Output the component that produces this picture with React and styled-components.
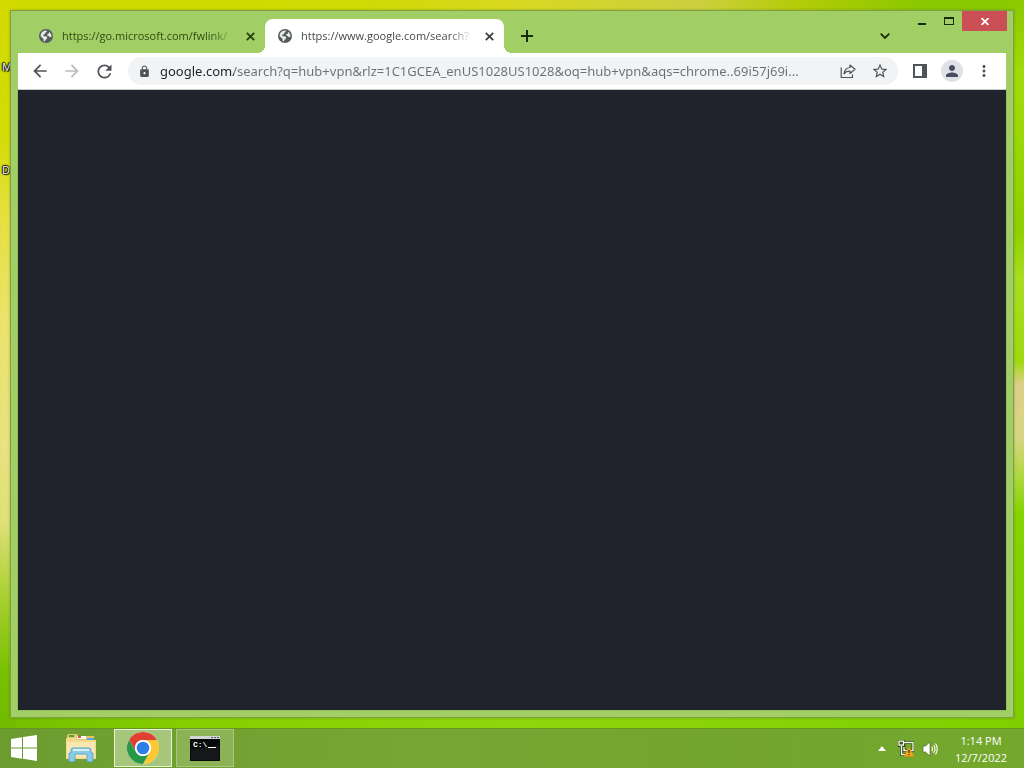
import React from "react";
import styled, { createGlobalStyle } from "styled-components";
import {
  MdArrowBack,
  MdArrowForward,
  MdLock,
  MdMoreVert,
  MdPerson,
  MdRefresh,
  MdStarBorder,
} from "react-icons/md";

const colors = {
  frame: "#a1cf65",
  toolbar: "#ffffff",
  field: "#f1f3f4",
  page: "#20222c",
  text: "#202124",
  muted: "#6b6f74",
  tabText: "#2f4a13",
  close: "#ca5056",
};

const GlobalStyle = createGlobalStyle`
  * {
    box-sizing: border-box;
  }

  body {
    margin: 0;
    font-family: "Open Sans", "Noto Sans", sans-serif;
    font-size: 11px;
    overflow: hidden;
  }

  button,
  input {
    margin: 0;
    padding: 0;
    border: 0;
    background: none;
    font: inherit;
    color: inherit;
  }
`;

// Desktop
const Desktop = styled.div`
  position: relative;
  display: flex;
  flex-direction: column;
  height: 100vh;
  background:
    linear-gradient(180deg, #8cc800 0%, #a2dc08 10%, #8fd000 30%, #a8dd20 36%, #9fda10 47%, #dccf88 50%, #d8d684 57%, #b0d840 62%, #84d400 67%, #7fcc00 100%) right / 16px 100% no-repeat,
    linear-gradient(180deg, #d2da00 0%, #d4dc08 18%, #e6e040 28%, #ebe36c 42%, #e8e280 58%, #dfe078 68%, #a8d030 78%, #76bf00 88%, #70b800 100%) left / 16px 100% no-repeat,
    linear-gradient(90deg, #d0da00 0%, #d0da04 35%, #d8d820 50%, #ccd040 68%, #b4cc08 78%, #8ac800 90%, #8ac800 100%) top / 100% 50% no-repeat,
    linear-gradient(90deg, #74bd00 0%, #86d000 20%, #90d60c 50%, #7fd000 100%);
`;

const Shortcut = styled.a`
  position: absolute;
  left: 2px;
  top: ${({ $top }) => $top}px;
  color: #ffffff;
  line-height: 16px;
  text-decoration: none;
  text-shadow: 0 0 2px #000000, 1px 1px 1px #000000, -1px 0 1px #000000, 0 -1px 1px #000000;
`;

// Browser window
const BrowserWindow = styled.main`
  position: relative;
  display: flex;
  flex-direction: column;
  flex: 1;
  min-height: 0;
  margin: 10px;
  padding: 0 7px 7px;
  border: 1px solid #7fa042;
  background: ${colors.frame};
  box-shadow: 0 0 3px rgba(40, 60, 0, 0.25);
`;

const TitleBar = styled.header`
  display: flex;
  height: 42px;
  padding-left: 8px;
`;

const TabList = styled.div`
  display: flex;
  align-items: flex-end;
  min-width: 0;
`;

const Tab = styled.div`
  position: relative;
  display: flex;
  align-items: center;
  width: 239px;
  height: 34px;
  padding: 0 7px 0 13px;
  border-radius: 8px 8px 0 0;
  color: ${({ $active }) => ($active ? "#45484c" : colors.tabText)};
  background: ${({ $active }) => ($active ? colors.toolbar : "transparent")};

  &::before,
  &::after {
    content: "";
    display: ${({ $active }) => ($active ? "block" : "none")};
    position: absolute;
    bottom: 0;
    width: 8px;
    height: 8px;
  }

  &::before {
    left: -8px;
    background: radial-gradient(circle at 0 0, transparent 8px, ${colors.toolbar} 8px);
  }

  &::after {
    right: -8px;
    background: radial-gradient(circle at 100% 0, transparent 8px, ${colors.toolbar} 8px);
  }
`;

const TabLabel = styled.button`
  display: flex;
  align-items: center;
  gap: 9px;
  flex: 1;
  min-width: 0;
  text-align: left;
`;

const TabTitle = styled.span`
  flex: 1;
  overflow: hidden;
  white-space: nowrap;
  line-height: 16px;
  mask-image: linear-gradient(90deg, #000000 calc(100% - 24px), transparent);
`;

const TabButton = styled.button`
  display: flex;
  align-items: center;
  justify-content: center;
  flex: none;
  width: 16px;
  height: 16px;
  margin-left: 8px;
  color: ${({ $active }) => ($active ? "#3c4043" : "#24400c")};
`;

const NewTab = styled.button`
  display: flex;
  align-items: center;
  justify-content: center;
  align-self: flex-end;
  width: 28px;
  height: 34px;
  margin-left: 9px;
  color: #1b2e08;
`;

const WindowControls = styled.div`
  display: flex;
  align-items: flex-start;
  margin: 0 -1px 0 auto;
  color: #1a2b0a;
`;

const TabSearch = styled.button`
  display: flex;
  align-items: center;
  justify-content: center;
  align-self: flex-end;
  width: 28px;
  height: 34px;
  margin-right: 9px;
`;

const Caption = styled.button`
  display: flex;
  align-items: center;
  justify-content: center;
  width: ${({ $close }) => ($close ? 45 : 27)}px;
  height: 20px;
  color: ${({ $close }) => ($close ? "#ffffff" : "inherit")};
  background: ${({ $close }) => ($close ? colors.close : "transparent")};
`;

const Toolbar = styled.nav`
  display: flex;
  align-items: center;
  height: 37px;
  padding: 0 6px;
  color: #505357;
  background: ${colors.toolbar};
  border-bottom: 1px solid #dfe1e5;
`;

const ToolButton = styled.button`
  display: flex;
  align-items: center;
  justify-content: center;
  flex: none;
  width: 32px;
  height: 28px;

  &:disabled {
    color: #b9bbbe;
  }
`;

const Omnibox = styled.div`
  display: flex;
  align-items: center;
  flex: 1;
  min-width: 0;
  height: 28px;
  margin: 0 6px 0 8px;
  padding-right: 2px;
  border-radius: 14px;
  background: ${colors.field};
`;

// The host part of the address is darker than the path
const Address = styled.input`
  flex: 1;
  min-width: 0;
  height: 20px;
  font-family: "Noto Sans", "Open Sans", sans-serif;
  font-size: 13px;
  line-height: 20px;
  outline: none;
  color: transparent;
  background: linear-gradient(90deg, ${colors.text} 74px, ${colors.muted} 74px);
  background-clip: text;
`;

const Avatar = styled.span`
  display: flex;
  align-items: center;
  justify-content: center;
  width: 22px;
  height: 22px;
  border-radius: 50%;
  color: #474c5e;
  background: #dee1e8;
`;

const Page = styled.section`
  flex: 1;
  background: ${colors.page};
  box-shadow: 0 0 1px #55703a;
`;

// Taskbar
const Taskbar = styled.footer`
  display: flex;
  align-items: flex-start;
  gap: 4px;
  height: 40px;
  border-top: 1px solid #659423;
  background: linear-gradient(90deg, #6c9c30, #78a634 40%, #74a430 70%, #73a82c);
`;

const TaskButton = styled.button`
  display: flex;
  align-items: center;
  justify-content: center;
  width: ${({ $start }) => ($start ? 48 : 58)}px;
  height: 38px;
  border: 1px solid ${({ $state }) => (
    $state === "active" ? "#eaf3d8" : $state === "open" ? "#a8c87c" : "transparent"
  )};
  background: ${({ $state }) => (
    $state === "active" ? "#a6c67c" : $state === "open" ? "#8bb356" : "transparent"
  )};
`;

const Tray = styled.div`
  display: flex;
  align-items: center;
  height: 39px;
  margin-left: auto;
  padding-right: 11px;
`;

const TrayButton = styled.button`
  display: flex;
  align-items: center;
  justify-content: center;
  width: 24px;
  height: 24px;
`;

const Clock = styled.time`
  width: 64px;
  margin-left: 7px;
  color: #ffffff;
  line-height: 17px;
  text-align: center;
  white-space: nowrap;
`;

const GlobeIcon = () => (
  <svg width="14" height="14" viewBox="0 0 14 14">
    <circle cx="7" cy="7" r="7" fill="#545b5c" />
    <path d="M5.4 1.8 8 1.6 7.4 3.2 6.2 3.8 5.8 5.2 4.2 5.8 4.4 7.2H7.2L8.2 8.4 7.8 10 6.4 10.8 6 12.6 4.6 12 4.4 9.8 1.6 7.2C1.4 4.8 3 2.6 5.4 1.8zM10 2.6l2.2 2.6.4 2.6-1.8.4-1-1.2-1.6-.4.2-1.6 1.6-.6z" fill="#e6ece4" />
  </svg>
);

const CloseIcon = () => (
  <svg width="9" height="9" viewBox="0 0 9 9" stroke="currentColor" strokeWidth="1.8">
    <path d="M.8.8 8.200 8.200M8.200.8.8 8.200" />
  </svg>
);

const ShareIcon = () => (
  <svg width="16" height="16" viewBox="0 0 16 16" fill="none" stroke="currentColor" strokeWidth="1.2" strokeLinejoin="round">
    <path d="M1.200 4.500v10h11.300v-3" />
    <path d="M10 2 15 6.300 10 10.500V8.200C7.200 8.200 5.200 9 4 10.800 4.400 7.300 6.200 4.900 10 4.500z" />
  </svg>
);

const SidePanelIcon = () => (
  <svg width="14" height="14" viewBox="0 0 14 14">
    <path d="M0 0h14v14H0zM2 2v10h7V2z" fill="currentColor" fillRule="evenodd" />
  </svg>
);

const WindowsIcon = () => (
  <svg width="28" height="26" viewBox="0 0 28 26" fill="#ffffff">
    <path d="M1 4 12 2.300V12.400H1zM13 2.100 27 0V12.400H13zM1 13.500H12V23.700L1 22zM13 13.500H27V26L13 23.800z" />
  </svg>
);

const FolderIcon = () => (
  <svg width="32" height="30" viewBox="0 0 32 30">
    <path d="M2 3 3 1h9l1 2h16v7H2z" fill="#e8c765" />
    <path d="M4 2h5v2H4z" fill="#4aa34a" />
    <path d="M12 3h9v3h-9z" fill="#ffffff" />
    <path d="M13 3h3v2h-3z" fill="#d9583b" />
    <path d="M22 5h7v2h-7z" fill="#5ba5dc" />
    <path d="M1 5h10l2 2h18v19H1z" fill="#f2d98c" />
    <path d="M2 9h28v16H2z" fill="#f9e7af" />
    <path d="M6 17q0-2 2-2h16q2 0 2 2v3h2v8q-3 2-6 0v-7H10v7q-3 2-6 0v-8h2z" fill="#8bcbea" stroke="#5ba9d1" />
    <path d="M8 17h16" stroke="#d8f2fc" strokeWidth="2" />
  </svg>
);

const ChromeIcon = () => (
  <svg width="32" height="32" viewBox="0 0 48 48">
    <circle cx="24" cy="24" r="24" fill="#ffffff" />
    <path d="M3.200 12A24 24 0 0 1 44.800 12H24A12 12 0 0 0 13.600 30z" fill="#df4033" />
    <path d="M44.800 12A24 24 0 0 1 24 48L34.400 30A12 12 0 0 0 24 12z" fill="#fcc934" />
    <path d="M24 48A24 24 0 0 1 3.200 12L13.600 30A12 12 0 0 0 34.400 30z" fill="#279847" />
    <circle cx="24" cy="24" r="12" fill="#ffffff" />
    <circle cx="24" cy="24" r="9.500" fill="#2f7de9" />
  </svg>
);

const PromptIcon = () => (
  <svg width="30" height="25" viewBox="0 0 30 25">
    <path d="M0 0h30v25H0z" fill="#08090a" />
    <path d="M0 0h30v3H0z" fill="#cfd4d4" />
    <path d="M21 1h2v1h-2zM24 1h2v1h-2zM27 1h2v1h-2z" fill="#55606a" />
    <path d="M1 14 29 9v15H1z" fill="#24272a" opacity="0.5" />
    <text x="3" y="11" fill="#ffffff" fontFamily="Liberation Mono, monospace" fontSize="8" fontWeight="bold">C:\</text>
    <path d="M18 11.500h8" stroke="#ffffff" />
  </svg>
);

const NetworkIcon = () => (
  <svg width="16" height="17" viewBox="0 0 16 17">
    <path d="M6 2.500h9v8H6zM3.500 6v8.500H9M1 1.500h4.500v4H1z" fill="none" stroke="#2c4310" strokeWidth="3" />
    <path d="M6 2.500h9v8H6V7M3.500 6v8.500H9" fill="none" stroke="#f2f6ea" strokeWidth="1.400" />
    <path d="M1 1.200h4.500v4H1z" fill="#3d5c18" stroke="#ffffff" strokeWidth="1.200" />
    <path d="M11 7 16 16.500H6z" fill="#f5a81c" stroke="#d5830c" strokeWidth="0.600" />
    <path d="M11 10v3M11 14v1.200" stroke="#3b2a00" strokeWidth="1.200" />
  </svg>
);

const SpeakerIcon = () => (
  <svg width="16" height="16" viewBox="0 0 16 16" fill="none">
    <path d="M1 5h2.500L8 1v14l-4.500-4H1z" fill="#ffffff" stroke="#425d20" strokeWidth="0.600" />
    <path d="M9.700 5.800q1.500 2.200 0 4.400M11.600 4q2.800 4 0 8M13.500 2.500q3.500 5.500 0 11" stroke="#ffffff" strokeWidth="1.100" />
  </svg>
);

const tabs = [
  { title: "https://go.microsoft.com/fwlink/", active: false },
  { title: "https://www.google.com/search?", active: true },
];

const url =
  "google.com/search?q=hub+vpn&rlz=1C1GCEA_enUS1028US1028&oq=hub+vpn&aqs=chrome..69i57j69i...";

export default function App() {
  return (
    <>
      <GlobalStyle />
      <Desktop>
        <Shortcut href="#m" $top={59}>M</Shortcut>
        <Shortcut href="#d" $top={162}>D</Shortcut>

        <BrowserWindow>
          <TitleBar>
            <TabList role="tablist">
              {tabs.map((tab) => (
                <Tab key={tab.title} $active={tab.active}>
                  <TabLabel role="tab" aria-selected={tab.active}>
                    <GlobeIcon />
                    <TabTitle>{tab.title}</TabTitle>
                  </TabLabel>
                  <TabButton aria-label="Close tab" $active={tab.active}>
                    <CloseIcon />
                  </TabButton>
                </Tab>
              ))}
            </TabList>
            <NewTab aria-label="New tab">
              <svg width="12" height="12" viewBox="0 0 12 12" stroke="currentColor" strokeWidth="2">
                <path d="M6 0v12M0 6h12" />
              </svg>
            </NewTab>

            <WindowControls>
              <TabSearch aria-label="Search tabs">
                <svg width="10" height="6" viewBox="0 0 10 6" fill="none" stroke="currentColor" strokeWidth="1.800">
                  <path d="M.7.7 5 5 9.300.7" />
                </svg>
              </TabSearch>
              <Caption aria-label="Minimize">
                <svg width="8" height="8" viewBox="0 0 8 8" fill="currentColor">
                  <path d="M0 6h8v2H0z" />
                </svg>
              </Caption>
              <Caption aria-label="Maximize">
                <svg width="10" height="8" viewBox="0 0 10 8" fill="currentColor">
                  <path d="M0 0h10v8H0zM1 2v5h8V2z" fillRule="evenodd" />
                </svg>
              </Caption>
              <Caption aria-label="Close" $close>
                <svg width="8" height="7" viewBox="0 0 8 7" stroke="currentColor" strokeWidth="1.800">
                  <path d="M.5 0 7.500 7M7.500 0 .5 7" />
                </svg>
              </Caption>
            </WindowControls>
          </TitleBar>

          <Toolbar>
            <ToolButton aria-label="Back"><MdArrowBack size={20} /></ToolButton>
            <ToolButton aria-label="Forward" disabled><MdArrowForward size={20} /></ToolButton>
            <ToolButton aria-label="Reload"><MdRefresh size={21} /></ToolButton>
            <Omnibox>
              <ToolButton aria-label="Site information"><MdLock size={13} /></ToolButton>
              <Address aria-label="Address" defaultValue={url} spellCheck={false} />
              <ToolButton aria-label="Share"><ShareIcon /></ToolButton>
              <ToolButton aria-label="Bookmark"><MdStarBorder size={18} /></ToolButton>
            </Omnibox>
            <ToolButton aria-label="Side panel"><SidePanelIcon /></ToolButton>
            <ToolButton aria-label="Profile">
              <Avatar><MdPerson size={18} /></Avatar>
            </ToolButton>
            <ToolButton aria-label="Menu"><MdMoreVert size={18} /></ToolButton>
          </Toolbar>

          <Page />
        </BrowserWindow>

        <Taskbar>
          <TaskButton aria-label="Start" $start><WindowsIcon /></TaskButton>
          <TaskButton aria-label="File Explorer"><FolderIcon /></TaskButton>
          <TaskButton aria-label="Google Chrome" $state="active"><ChromeIcon /></TaskButton>
          <TaskButton aria-label="Command Prompt" $state="open"><PromptIcon /></TaskButton>
          <Tray>
            <TrayButton aria-label="Show hidden icons">
              <svg width="8" height="5" viewBox="0 0 8 5" fill="#ffffff">
                <path d="M4 0 8 5H0z" />
              </svg>
            </TrayButton>
            <TrayButton aria-label="Network"><NetworkIcon /></TrayButton>
            <TrayButton aria-label="Volume"><SpeakerIcon /></TrayButton>
            <Clock>
              1:14 PM
              <br />
              12/7/2022
            </Clock>
          </Tray>
        </Taskbar>
      </Desktop>
    </>
  );
}
